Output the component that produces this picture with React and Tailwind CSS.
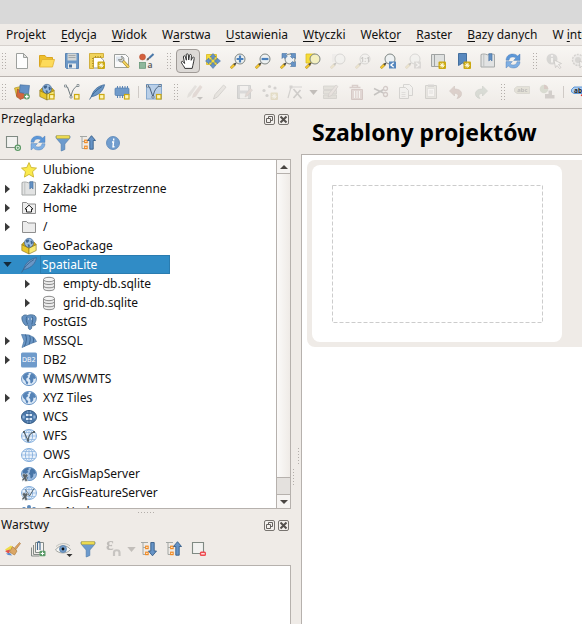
import React from "react";

const BLUE = "#6b97c6";

function Svg({ children, faded }) {
  return (
    <svg
      viewBox="0 0 16 16"
      aria-hidden="true"
      className={`size-4 shrink-0 overflow-visible ${faded ? "opacity-25 grayscale-50" : ""}`}
      fill="none"
    >
      {children}
    </svg>
  );
}

/* ---------- shared glyph parts ---------- */

const Lens = ({ fill = "#eef1f2", stroke = "#7f8784" }) => (
  <>
    <path d="M0.8 15.2 5 11" stroke="#9a7d1e" strokeWidth="2.600" />
    <path d="M0.8 15.2 4 12" stroke="#f6c833" strokeWidth="1.800" />
    <path d="M4.2 11.8 6 10" stroke="#444" strokeWidth="1.600" />
    <circle cx="10" cy="6" r="5" fill={fill} stroke={stroke} strokeWidth="1" />
  </>
);

const NewBadge = () => <rect x="10.500" y="10.500" width="4.500" height="4.500" fill="#fff6b8" stroke="#cba810" strokeWidth="1.200" />;

const StarBadge = () => (
  <>
    <rect x="8.500" y="8.600" width="7.500" height="7.400" rx="1" fill="#cba810" />
    <path d="M12.200 9.800v5M9.700 12.300h5M10.400 10.500l3.600 3.600M14 10.500l-3.600 3.600" stroke="#fffbe0" strokeWidth="1" />
  </>
);

const PlusBadge = () => (
  <>
    <circle cx="12.800" cy="12.600" r="3" fill="#5a9a67" />
    <path d="M12.800 10.800v3.600M11 12.600h3.600" stroke="#fff" strokeWidth="1.200" />
  </>
);

const RefreshArt = () => (
  <>
    <path d="M1 7.300C1.200 3.200 4 1 7.600 1c2.200 0 3.800.7 5 2L15 1v6.400H8.600l2.200-2.300C9.900 4.300 8.900 4 7.700 4 5.500 4 4.300 5.200 4 7.300Z" fill="#5c97d8" stroke="#4677b0" strokeWidth=".4" />
    <path d="M15 8.700c-.2 4.100-3 6.300-6.600 6.300-2.200 0-3.800-.7-5-2L1 15V8.600h6.400l-2.200 2.300c.9.800 1.900 1.100 3.100 1.100 2.200 0 3.400-1.200 3.700-3.300Z" fill="#7fafe3" stroke="#4677b0" strokeWidth=".4" />
  </>
);

const TreeLines = () => (
  <>
    <path d="M0 1.500h7M2 1.500v12h3M2 6.500h3" stroke="#a3a7a4" strokeWidth="1" />
    <rect x="4.700" y="5.200" width="2.400" height="2.400" fill="#fff" stroke="#f08a24" strokeWidth="1.200" />
    <rect x="4.700" y="11.200" width="2.400" height="2.400" fill="#fff" stroke="#f08a24" strokeWidth="1.200" />
  </>
);

const FeatherArt = () => (
  <>
    <path d="M2.500 12.800C3.500 7.500 7.500 2.200 15.500.700 14.500 6 11 10.500 3.500 12.500Z" fill="#6b97c6" stroke="#3f6a98" strokeWidth=".8" />
    <path d="M.6 15.500C3 10.500 7 6 13 2.500" stroke="#3a648f" strokeWidth=".9" />
  </>
);

const GlobeArt = ({ fill = "#dce9f7", land = "#5583b7" }) => (
  <>
    <ellipse cx="8" cy="8" rx="7.500" ry="6.600" fill={fill} stroke="#5d8cc0" strokeWidth=".9" />
    <path d="M1.500 5.200 4 2.600l3.200-.8.800 1.500-1.700 1.300 1 1.500-2.200 1.600.5 2.200 1.700 1-.8 2.500-1.200-.3-1-3.200-2-1.800ZM9 4.500l1.500-2.400 2.700 1.500 1.800 3-1 1.500-1.500-.6-.4 3-1.600 2-1.100-.5-.2-3-1.400-1.200 1-1.500Z" fill={land} />
  </>
);

const GridGlobeArt = ({ fill = "#eaf2fb", line = "#86b0de" }) => (
  <>
    <ellipse cx="8" cy="8" rx="7.500" ry="6.500" fill={fill} stroke={line} strokeWidth="1" />
    <ellipse cx="8" cy="8" rx="3.600" ry="6.500" stroke={line} strokeWidth=".9" />
    <path d="M8 1.500v13M.5 8h15M2 4.500h12M2 11.500h12" stroke={line} strokeWidth=".7" />
  </>
);

const BoxArt = () => (
  <>
    <path d="M.8 6.500 8 10v6L.8 12.500Z" fill="#e8c62b" stroke="#857017" strokeWidth=".6" />
    <path d="M15.200 6.500 8 10v6l7.200-3.500Z" fill="#f8ea78" stroke="#857017" strokeWidth=".6" />
    <path d="M.8 6.500 3 4l5 2 5-2 2.200 2.500L8 10Z" fill="#d7ae12" stroke="#857017" strokeWidth=".6" />
    <circle cx="8" cy="4.800" r="4.500" fill="#9bbce0" stroke="#3f648e" strokeWidth=".7" />
    <path d="m5 2 2.500-.8.800 1.800L6.500 4.800 5 4.200ZM9.500 3l1.500-.6 1 2.600-2 1.600ZM6.500 6.200l2 .2.500 2-1.700.6Z" fill="#3f648e" />
  </>
);

const VArt = ({ stroke = "#6b777c" }) => (
  <>
    <path d="M1.500 2.500 3.500 3 7 13 C8 7 10 3 14 2" stroke={stroke} strokeWidth="1" />
    <path d="M.5 1h2v2h-2ZM13 .5h2v2h-2ZM6 12h2v2H6Z" fill="#fff" stroke={stroke} strokeWidth=".7" />
  </>
);

const PencilArt = ({ fill = "#b98f7c" }) => (
  <path d="M1.500 15 3 10.500 11.500 1 14 3.200 5.500 13Z" fill={fill} stroke="#6b6661" strokeWidth=".8" />
);

const PageShape = ({ x = 0, y = 0 }) => (
  <path d={`M${x + 0.5} ${y + 0.5}h6l3 3v8h-9Z`} fill="#eef0ee" stroke="#7d817e" strokeWidth="1" />
);

const ArcMark = () => (
  <path d="M1 9 3 7.500l2 1 1-1 1 2-1.500 2.500 1.500 3-3 .5-.5-2-2 2-.5-2 1.500-2Z" fill="#5a6369" stroke="#eef2f6" strokeWidth=".5" />
);

const art = {
  newFile: (
    <>
      <path d="M2.500.500H9.500L13.500 4.500v11h-11Z" fill="#fdfdfd" stroke="#9da09d" />
      <path d="M9.500.500v4h4Z" fill="#e2e3e1" stroke="#9da09d" />
    </>
  ),
  open: (
    <>
      <path d="M.5 13.500V2.500H6L7.500 4.500H13.500V7" fill="#eebf2c" stroke="#d9a520" />
      <path d="M.6 14 3 6.500H15.500L13.500 14Z" fill="#fddb5a" stroke="#dfb030" strokeWidth=".8" />
    </>
  ),
  save: (
    <>
      <path d="M1.500.500h13v15H2.500l-1-1Z" fill={BLUE} stroke="#5b85b3" />
      <path d="M3.500.500h9v7h-9Z" fill="#d3d6d6" />
      <path d="M4.500 2.500h7M4.500 4.500h7" stroke="#a3a8aa" />
      <path d="M4 10.500h8v5H4Z" fill="#eceeee" />
      <path d="M5 11.500h3v3H5Z" fill="#4a719c" />
    </>
  ),
  newLayout: (
    <>
      <path d="M4.500 4.500H11.500L14.500 7v8h-10Z" fill="#fff" stroke="#9a9d9b" />
      <path d="M.5.500h14v4H4.500v11h-4Z" fill="#f0d35a" stroke="#c9a325" strokeWidth=".8" />
      <path d="M3 5.500h1.500M3 8h1.500M3 10.500h1.500M3 13h1.500M6.500 3v1.500M9 3v1.500M11.500 3v1.500" stroke="#9c7e1c" strokeWidth=".8" />
      <StarBadge />
    </>
  ),
  layouts: (
    <>
      <path d="M.5 1.500h11l3 3v10H.5Z" fill="#fafafa" stroke="#9b9f9c" />
      <path d="M2 3.500h6v5H2Z" fill="#dfe7ef" />
      <path d="m8 7 6 6.500" stroke="#b0912a" strokeWidth="3" strokeLinecap="round" />
      <path d="m8.500 7.500 5.500 6" stroke="#f4d564" strokeWidth="1.800" strokeLinecap="round" />
      <path d="M4.500 6.500c.2 2 2.200 3 4 2.200L9.800 7c.6-1.800-.5-3.600-2.600-3.700l1.200 2L7 6.900Z" fill="#d4d7d5" stroke="#6c706e" strokeWidth=".7" />
    </>
  ),
  style: (
    <>
      <circle cx="3.500" cy="4" r="3" fill="#d4603c" stroke="#b04a2a" strokeWidth=".5" />
      <rect x=".5" y="9.500" width="6" height="5.800" fill="#8fb79c" stroke="#679779" strokeWidth=".8" />
      <path d="m14.500 1-4.500 4.200" stroke="#4a78a8" strokeWidth="2" />
      <path d="M7.500 7.500c0-1.800 1-3 2.500-2.700C10.800 6.500 9.500 7.700 7.500 7.500Z" fill="#666" />
      <text x="8.600" y="15.200" fontSize="8.500" fill="#5a5a5a" fontFamily="Noto Sans" fontWeight="600">a</text>
    </>
  ),
  hand: (
    <path
      d="M4.800 15.400C4.300 13.500 2.600 12 1.500 9.800.9 8.500 2.300 7.800 3.200 8.800L4.600 10.500 3.400 4C3.200 2.600 5 2.300 5.300 3.600L6.400 7.200 6.200 1.800C6.200.4 8.200.4 8.300 1.800L8.700 7 9.500 2.300C9.700 1 11.500 1.200 11.400 2.600L11.200 7.300 12.500 4.600C13.100 3.500 14.600 4.100 14.200 5.500 13.600 7.600 13.700 10 12.800 12.500L12.200 15.400Z"
      fill="#fff" stroke="#333" strokeWidth="1" strokeLinejoin="round"
    />
  ),
  pan: (
    <>
      <path d="M1.500 1.500h10v10h-10Z" fill="#f5dc3a" stroke="#d8b820" strokeWidth=".8" />
      <path d="M8 .500 11 4H9.200v2.200H6.800V4H5ZM8 15.500 5 12h1.800V9.800h2.400V12H11ZM.500 8 4 5v1.800h2.200v2.400H4V11ZM15.500 8 12 5v1.800H9.800v2.400H12V11Z" fill="#6693c6" stroke="#4672a3" strokeWidth=".5" />
    </>
  ),
  zoomIn: (<><Lens /><path d="M10 2.600v6.800M6.600 6h6.800" stroke="#4a80bb" strokeWidth="2.200" /></>),
  zoomOut: (<><Lens /><path d="M6.600 6h6.800" stroke="#4a80bb" strokeWidth="2.200" /></>),
  zoomFull: (
    <>
      <Lens />
      <path d="M2 .500h5L5.600 2 7 3.500 5 5.500 3.500 4 2 5.500ZM15.500.500v5L14 4l-1.500 1.500-2-2L12 2 10.500.500ZM15.500 13.500h-5L12 12l-1.500-1.500 2-2L14 10l1.500-1.500Z" fill="#6693c6" stroke="#4672a3" strokeWidth=".6" />
    </>
  ),
  zoomSel: (
    <>
      <path d="M1 1h9v9H1Z" fill="#f5dc3a" stroke="#dcbc22" strokeWidth=".8" />
      <Lens fill="#f4f0c0" />
    </>
  ),
  zoomLayer: (<><path d="M2 1h7v8H2Z" fill="#ddd" /><Lens /></>),
  zoomNative: (
    <>
      <Lens />
      <text x="5.600" y="8.600" fontSize="6.500" fontWeight="700" fill="#444" fontFamily="Noto Sans">1:1</text>
    </>
  ),
  zoomLast: (
    <>
      <Lens />
      <path d="M9 8.500h7v7H9Z" fill="#5586bd" />
      <path d="m13.700 9.800-2.800 2.200 2.800 2.200" stroke="#fff" strokeWidth="1.300" />
    </>
  ),
  zoomNext: (
    <>
      <Lens />
      <path d="M9 8.500h7v7H9Z" fill="#999" />
      <path d="m11.200 9.800 2.800 2.200-2.800 2.200" stroke="#fff" strokeWidth="1.300" />
    </>
  ),
  newMap: (
    <>
      <path d="M1.500 1.500h13v12h-13Z" fill="#dfe1e0" stroke="#a0a3a2" />
      <path d="M4.500 1.500v12" stroke="#a0a3a2" />
      <StarBadge />
    </>
  ),
  newBookmark: (
    <>
      <path d="M3.500.500h8V13L7.500 10l-4 2.500Z" fill="#5888be" stroke="#446f9e" />
      <StarBadge />
    </>
  ),
  bookmarks: (
    <>
      <path d="M1 1.500c2-.7 4-.7 6.500.300 2-1 5-1 7-.3v12.500H1Z" fill="#e2e3e3" stroke="#a6a9a8" />
      <path d="M3.800 1.300v12.500" stroke="#bfc1c0" />
      <path d="M8.800.7h3.200v7.300l-1.600-1.500L8.800 8Z" fill="#6391c4" stroke="#446f9e" strokeWidth=".6" />
    </>
  ),
  refresh: <RefreshArt />,
  identify: (
    <>
      <circle cx="6" cy="6" r="5.500" fill="#858b90" />
      <path d="M6 2v1.800M6 5v4.500" stroke="#fff" strokeWidth="1.800" />
      <path d="m8 7 7.500 3.500-3 1 2.500 3-1.500 1-2.500-3-1.500 2.200Z" fill="#fff" stroke="#555" strokeWidth=".8" />
    </>
  ),
  action: (
    <>
      <circle cx="7" cy="7" r="5.500" fill="#d8d8d8" stroke="#777" strokeWidth="1.400" strokeDasharray="2 1" />
      <circle cx="7" cy="7" r="3" fill="#888" />
      <path d="m8.500 8 6.500 3-3 1 2 3-1.500.8-2.200-2.800-1.300 2Z" fill="#fff" stroke="#555" strokeWidth=".8" />
    </>
  ),
  dataSource: (
    <>
      <path d="m.5 4 6-1.500 2 8.500-5.500 2.500Z" fill="#e6c740" stroke="#a88c20" strokeWidth=".6" />
      <path d="m2.500 12 1-7 7 5 2 3-6.500 2.500Z" fill="#d2653f" stroke="#9c4526" strokeWidth=".6" />
      <path d="m6 .8 9.500.7-1 8.500-9-1.500Z" fill="#6491c5" stroke="#406a99" strokeWidth=".6" />
      <PlusBadge />
    </>
  ),
  geoPackageNew: (<><BoxArt /><NewBadge /></>),
  shapeNew: (<><VArt /><NewBadge /></>),
  spatialiteNew: (<><FeatherArt /><NewBadge /></>),
  memoryNew: (
    <>
      <path d="M3.500 2v12M6 2v12M8.500 2v12M11 2v12M13.500 2v12" stroke="#5c86b6" strokeWidth="1" />
      <rect x="1" y="4" width="14" height="7.500" rx="1" fill="#6f9aca" stroke="#527cac" strokeWidth=".7" />
      <NewBadge />
    </>
  ),
  virtualNew: (
    <>
      <rect x=".5" y=".5" width="15" height="14.500" fill="#b9cfe8" stroke="#85a8ce" />
      <VArt stroke="#47607a" />
      <NewBadge />
    </>
  ),
  edits: (
    <>
      <path d="m0 14 1-4 7-9 2 1.500-6.500 9.500Z" fill="#b7afa7" />
      <path d="m5 14 1-4 7-9 2.500 2-6.500 9.500Z" fill="#c99386" />
      <path d="M10 13h6l-3 3Z" fill="#444" />
    </>
  ),
  pencil: <PencilArt fill="#c9c2b4" />,
  saveEdits: (
    <>
      <path d="M.5 1.500h13v13H.5Z" fill="#8e9aa6" stroke="#67717a" />
      <path d="M3 2h8v4.500H3ZM3 9.500h8v5H3Z" fill="#eee" />
      <path d="m8 13 1-3.500 4.500-5 2 1.500-4.500 5.500Z" fill="#c98f80" stroke="#766" strokeWidth=".5" />
    </>
  ),
  addPoint: (
    <>
      <circle cx="2" cy="6.500" r="1.600" fill="#777" /><circle cx="7.500" cy="2.500" r="1.600" fill="#777" />
      <circle cx="13" cy="4" r="1.600" fill="#777" /><circle cx="5" cy="11.500" r="1.600" fill="#777" />
      <StarBadge />
    </>
  ),
  vertex: (
    <>
      <path d="M1 14 4 3h11" stroke="#777" strokeWidth="1.200" />
      <path d="M2.500 1.500h3v3h-3Z" fill="#777" />
      <path d="m6.500 5 8 9.500M13.500 6l-7 8" stroke="#666" strokeWidth="1.700" />
    </>
  ),
  attributes: (
    <>
      <path d="M.5 2h13v3.500H.5ZM.5 6.500h13V10H.5ZM.5 11h13v3.500H.5Z" fill="#b6b29a" stroke="#77756a" strokeWidth=".8" />
      <path d="m5 13 1-3.500L13 1l2 1.500-6.500 9Z" fill="#d3b8ac" stroke="#766" strokeWidth=".7" />
    </>
  ),
  trash: (
    <>
      <path d="M1.500 3.500h11M4.500 3V1.500h5V3" stroke="#a3605c" strokeWidth="1.500" />
      <path d="M3.500 5.500h11v10h-11Z" fill="#c98985" stroke="#a3504c" />
      <path d="M6.500 7v7M9 7v7M11.500 7v7" stroke="#fff" />
    </>
  ),
  cut: (
    <>
      <path d="M1 4.500 10.500 9M1 11 10.500 5.500" stroke="#444" strokeWidth="1.500" />
      <circle cx="12.500" cy="4.500" r="2" stroke="#855" strokeWidth="1.300" />
      <circle cx="12.500" cy="10.500" r="2" stroke="#855" strokeWidth="1.300" />
    </>
  ),
  copy: (<><PageShape x={5} y={0} /><PageShape x={1} y={3} /><path d="M3.500 8.500h4M3.500 10.500h4M3.500 12.500h4" stroke="#999" strokeWidth=".8" /></>),
  paste: (
    <>
      <path d="M2.500 1.500h11v13h-11Z" fill="#c9c8b6" stroke="#77766c" />
      <path d="M5 .500h6v2.500H5Z" fill="#888" />
      <path d="M4.500 4.500h7v8h-7Z" fill="#fff" stroke="#999" strokeWidth=".6" />
      <path d="M6 7h4M6 9h4" stroke="#999" strokeWidth=".8" />
    </>
  ),
  undo: <path d="m1.500 7 5-5v3C11 5 14 7 13.500 10.500 13.200 12.500 11.500 14 9 14.500 11 12 10.500 9.500 6.500 9.300V12Z" fill="#b96a58" stroke="#8c5040" strokeWidth=".7" />,
  redo: <path d="m14.500 7-5-5v3C5 5 2 7 2.500 10.500 2.800 12.500 4.500 14 7 14.500 5 12 5.500 9.500 9.500 9.300V12Z" fill="#7fa588" stroke="#5c7c64" strokeWidth=".7" />,
  label: (
    <>
      <path d="M.5 4.500 3 2.500h12.500v7H3L.5 7.500Z" fill="#b9b77f" stroke="#8a886b" strokeWidth=".8" />
      <text x="3.200" y="8.300" fontSize="6" fontWeight="700" fill="#222" fontFamily="Noto Sans">abc</text>
    </>
  ),
  diagram: (
    <>
      <circle cx="5" cy="5" r="4.300" fill="#84a565" /><path d="M5 5V.7A4.300 4.300 0 0 1 9.300 5Z" fill="#b0503c" />
      <path d="M9.500 6.500h3.500v8H9.500ZM6 10h3.500v4.500H6ZM13 11h2.500v3.500H13Z" fill="#7f6f68" />
    </>
  ),
  pinLabel: (
    <>
      <path d="M.5 5.500 3 3h13v6.500H3L.5 8Z" fill="#a9cdf3" stroke="#5690d4" strokeWidth=".9" />
      <text x="3" y="8.800" fontSize="6.500" fontWeight="700" fill="#222" fontFamily="Noto Sans">ab</text>
      <path d="m10 11 5 2" stroke="#d33" strokeWidth="1.500" />
    </>
  ),
  addLayer: (
    <>
      <path d="M1.500 1.500h11v11h-11Z" fill="#f2f2f0" stroke="#808a83" strokeWidth="1.100" />
      <circle cx="12.800" cy="12.800" r="2.600" fill="#fff" stroke="#5b9965" strokeWidth="1.300" />
      <path d="M12.800 11.500v2.600M11.500 12.800h2.600" stroke="#5b9965" />
    </>
  ),
  filter: (
    <>
      <path d="M1 1h14v2L9.800 9v5.500L6.200 16V9L1 3Z" fill="#6c9acd" stroke="#4f7cae" strokeWidth=".7" />
      <path d="M1.500.7h13v2.600h-13Z" fill="#f4e254" stroke="#bdaa3c" strokeWidth=".7" />
    </>
  ),
  collapse: (<><TreeLines /><path d="m11.500.7 4 4.800h-2.300v8.700H9.800V5.500H7.500Z" fill="#6693c6" stroke="#355d89" strokeWidth=".9" /></>),
  expand: (<><TreeLines /><path d="m11.500 14.800-4-4.800h2.300V1.500h3.400V10h2.300Z" fill="#6693c6" stroke="#355d89" strokeWidth=".9" /></>),
  info: (
    <>
      <circle cx="8" cy="8" r="6.500" fill="#719dce" stroke="#5784b6" strokeWidth=".8" />
      <path d="M8.700 3.500v2M7 7h1.500l-.5 4.800h1.500" stroke="#fff" strokeWidth="1.400" />
    </>
  ),
  star: <path d="m8 .6 2.200 4.900 5.300.6-4 3.600 1.100 5.400L8 12.400l-4.600 2.700 1.100-5.400-4-3.600 5.300-.6Z" fill="#fbea4e" stroke="#cbb42c" strokeWidth=".9" />,
  home: (
    <>
      <path d="M1.500 13.500v-11h4l1.500 1.500h7.500v9.500Z" fill="#ececec" stroke="#8e8e8e" />
      <path d="m4 9 4-3.800L12 9h-1.500v3h-5V9Z" fill="#fff" stroke="#222" strokeWidth="1" />
    </>
  ),
  folder: <path d="M1.500 13.500v-11h4l1.500 1.500h7.500v9.500Z" fill="#ececec" stroke="#8e8e8e" />,
  geoPackage: <BoxArt />,
  feather: <FeatherArt />,
  db: (
    <>
      <path d="M2.500 3.500v9c0 1.400 2.500 2.200 5.500 2.200s5.500-.8 5.500-2.200v-9" fill="#ececec" stroke="#8b8b8b" />
      <path d="M2.500 6.500c0 1.400 2.500 2 5.500 2s5.500-.6 5.500-2M2.500 9.800c0 1.400 2.500 2 5.500 2s5.500-.6 5.500-2" stroke="#8b8b8b" />
      <ellipse cx="8" cy="3.500" rx="5.500" ry="2.200" fill="#f4f4f4" stroke="#8b8b8b" />
    </>
  ),
  postgis: (
    <>
      <path d="M1 2.800C2.500.5 5 .7 6.500 1.500 9 .4 12 .5 14 1.800 16 3.500 15.200 7 13.500 9.800L15 10.500 12.500 11.800 11 11.500 10.500 14.500C9.500 16 8 15.700 7.500 14.500L7 11 4.500 11.500C2 9.500.3 5.500 1 2.800Z" fill="#6692c2" stroke="#41698f" strokeWidth=".8" />
      <path d="M6 2.500C4.500 5 5.500 7.500 6.500 10M11 2.500c1.500 2 .5 5-.2 8" stroke="#3b648f" strokeWidth=".9" />
      <path d="M7 5h1M10 5h1" stroke="#fff" />
    </>
  ),
  mssql: (
    <>
      <path d="M.5 1.500 8 2 13 4.500 15.500 8.500 10 10.500 1 14.500 3 8Z" fill="#6b97c6" stroke="#4a75a4" strokeWidth=".7" />
      <path d="M4.500 1.500C6 5 5.500 9 3.500 13.500M8.500 2.500C9.800 5 9.300 8.500 8 11.500M12 4.500C12.800 6.500 12.600 8 12 9.800" stroke="#355f8c" strokeWidth=".9" />
    </>
  ),
  db2: (
    <>
      <rect x="0" y=".5" width="16" height="15" rx="1.500" fill="#6f9bcb" />
      <text x="1" y="9.800" fontSize="6.600" fill="#fff" fontFamily="DejaVu Sans">DB2</text>
    </>
  ),
  wms: <GlobeArt />,
  wcs: (
    <>
      <ellipse cx="8" cy="8" rx="7.500" ry="6.500" fill="#4c78a9" stroke="#2f5783" />
      <path d="M5 5h6v2H5ZM5 9h6v2H5Z" fill="#dbe8f6" />
      <path d="M1.500 6.500h2.200v3H1.500ZM12.300 6.500h2.200v3h-2.200ZM6 2.500h4v1H6ZM6 12.500h4v1H6Z" fill="#92b5db" />
      <path d="M8 1.500v13" stroke="#2f5783" strokeWidth=".8" />
    </>
  ),
  wfs: (
    <>
      <GridGlobeArt />
      <path d="M3 4 7 12.500C7.500 8 9 5 13 4" stroke="#55636b" strokeWidth="1.100" />
      <path d="M2 3h2v2H2ZM12 3h2v2h-2ZM6 11.500h2v2H6Z" fill="#55636b" />
    </>
  ),
  ows: <GridGlobeArt />,
  arcMap: (<><GlobeArt fill="#9dbce0" land="#4875a7" /><ArcMark /></>),
  arcFeature: (<><GridGlobeArt /><path d="M4.500 4.500 8.500 11 13 3.500" stroke="#55636b" /><ArcMark /></>),
  geoNode: (
    <g fill="#5a88ba">
      <circle cx="8" cy="3" r="2" /><circle cx="3" cy="5" r="2" /><circle cx="13" cy="5" r="2" />
      <path d="M7 4h2v9H7ZM3 6l5 4 5-4v3l-5 4-5-4Z" />
    </g>
  ),
  brush: (
    <>
      <path d="M0 8.500 6 4.500l2 2-5 5Z" fill="#efdc48" /><path d="m0 10 5-1.500L4 13Z" fill="#e05050" />
      <path d="M1 12.500 5 12l2 2.500-4-.5Z" fill="#5a8ace" />
      <path d="m9.500 7 5-5.500 1 1-4.500 6Z" fill="#dfa564" stroke="#a97438" strokeWidth=".6" />
      <path d="m7.500 5.500 4.500 4.500-2.500 4L4.500 11Z" fill="#dba766" stroke="#ae7c3e" strokeWidth=".7" />
    </>
  ),
  addGroup: (
    <>
      <path d="M5.500 1.500h8v10h-8Z" fill="#f5f4f2" stroke="#858b87" />
      <path d="M3.500 4v9.500h7M1.500 6.500v8.500h8" stroke="#858b87" />
      <path d="M7.500 9V2.500C7.500 0 10 0 10 2.500V9" stroke="#41698f" strokeWidth="1.100" />
      <rect x="9.500" y="9.700" width="6" height="5.500" rx="1" fill="#5a9a67" /><path d="M12.500 10.700v3.500M10.700 12.500h3.500" stroke="#fff" />
    </>
  ),
  eye: (
    <>
      <path d="M.5 9C4 3.500 12 3.500 15.500 8.500 12 13 4 13 .5 9Z" fill="#f6f6f4" stroke="#a3a6a2" />
      <path d="M1 5.500C5 1.700 11.500 1.700 15 5" stroke="#b9bcb8" strokeWidth=".9" />
      <circle cx="8" cy="8" r="3.500" fill="#769fcc" stroke="#4d78a7" strokeWidth=".7" /><circle cx="8" cy="8" r="1.400" fill="#111" />
      <path d="M11.500 13h6l-3 3Z" fill="#333" />
    </>
  ),
  epsilon: (
    <>
      <text x="1" y="8.500" fontSize="18" fontWeight="700" fill="#333" fontFamily="Liberation Serif">ε</text>
      <path d="M9 15v-3.500c0-3 5.500-3 5.500 0V15" stroke="#555" strokeWidth="2.200" />
    </>
  ),
  removeLayer: (
    <>
      <path d="M1.500 1.500h11v11h-11Z" fill="#f2f2f0" stroke="#808a83" strokeWidth="1.100" />
      <rect x="8.800" y="10.500" width="6.200" height="4.500" rx="1.500" fill="#ee4b50" /><path d="M10.200 12.800h3.500" stroke="#fff" strokeWidth="1.200" />
    </>
  ),
};

const Icon = ({ name, faded }) => <Svg faded={faded}>{art[name]}</Svg>;

/* ---------- toolbar parts ---------- */

function Tool({ icon, label, active, disabled }) {
  return (
    <button
      type="button"
      aria-label={label}
      aria-pressed={active || undefined}
      disabled={disabled}
      className={`flex size-6 shrink-0 items-center justify-center rounded-sm ${active ? "border border-[#a09b97] bg-[#dcd9d6]" : ""}`}
    >
      <Icon name={icon} faded={disabled} />
    </button>
  );
}

const Dots = ({ className }) => (
  <span className={`bg-[radial-gradient(circle,#b3aeaa_0.6px,transparent_0.8px)] bg-[size:3px_3px] ${className}`} />
);

const Grip = ({ first }) => (
  <span className={`flex h-6 shrink-0 items-center ${first ? "w-[9px] pl-px" : "w-[15px] pl-[6px]"}`}>
    <Dots className="h-[18px] w-[6px]" />
  </span>
);

const Separator = () => (
  <span className="flex h-6 w-[6px] shrink-0 items-center justify-center">
    <span className="h-3 w-px bg-[#cfcac6]" />
  </span>
);

const Caret = ({ label }) => (
  <button type="button" disabled aria-label={label} className="flex h-6 w-[10px] shrink-0 items-center justify-center">
    <svg viewBox="0 0 10 6" className="h-[5px] w-[9px]" aria-hidden="true"><path d="M0 0h10L5 6Z" fill="#c2beba" /></svg>
  </button>
);

function ToolRow({ items }) {
  return items.map((it, i) => {
    if (it === "grip") return <Grip key={i} first={i === 0} />;
    if (it === "sep") return <Separator key={i} />;
    if (it === "caret") return <Caret key={i} label="Więcej opcji" />;
    const [icon, label, state] = it;
    return <Tool key={i} icon={icon} label={label} disabled={state === "off"} active={state === "on"} />;
  });
}

const fileTools = [
  "grip",
  ["newFile", "Nowy projekt"], ["open", "Otwórz"], ["save", "Zapisz"], ["newLayout", "Nowy wydruk"],
  ["layouts", "Menedżer wydruków"], ["style", "Menedżer stylów"],
  "grip",
  ["hand", "Przesuń mapę", "on"], ["pan", "Przesuń do zaznaczenia"], ["zoomIn", "Powiększ"], ["zoomOut", "Pomniejsz"],
  ["zoomFull", "Pełny zasięg"], ["zoomSel", "Powiększ do zaznaczenia"], ["zoomLayer", "Powiększ do warstwy", "off"],
  ["zoomNative", "Rozdzielczość rastra", "off"], ["zoomLast", "Poprzedni widok"], ["zoomNext", "Następny widok", "off"],
  ["newMap", "Nowy widok mapy"], ["newBookmark", "Nowa zakładka"], ["bookmarks", "Zakładki"], ["refresh", "Odśwież"],
  "grip",
  ["identify", "Informacje o obiekcie", "off"], ["action", "Uruchom akcję", "off"],
];

const layerTools = [
  "grip",
  ["dataSource", "Źródła danych"], ["geoPackageNew", "Nowa warstwa GeoPackage"], ["shapeNew", "Nowa warstwa shapefile"],
  ["spatialiteNew", "Nowa warstwa SpatiaLite"], ["memoryNew", "Nowa warstwa tymczasowa"],
  "sep",
  ["virtualNew", "Nowa warstwa wirtualna"],
  "grip",
  ["edits", "Bieżące edycje", "off"], ["pencil", "Tryb edycji", "off"], ["saveEdits", "Zapisz edycje", "off"],
  ["addPoint", "Dodaj obiekt", "off"], ["vertex", "Edycja wierzchołków", "off"],
  "caret",
  ["attributes", "Zmień atrybuty", "off"], ["trash", "Usuń zaznaczone", "off"], ["cut", "Wytnij", "off"],
  ["copy", "Kopiuj", "off"], ["paste", "Wklej", "off"], ["undo", "Cofnij", "off"], ["redo", "Ponów", "off"],
  "grip",
  ["label", "Etykiety", "off"], ["diagram", "Diagramy", "off"],
  "sep",
  ["pinLabel", "Przypnij etykiety"],
];

/* Each menu title is split around its access key. */
const menus = [
  ["Pro", "j", "ekt"], ["", "E", "dycja"], ["", "W", "idok"], ["W", "a", "rstwa"], ["", "U", "stawienia"],
  ["", "W", "tyczki"], ["Wekt", "o", "r"], ["", "R", "aster"], ["", "B", "azy danych"], ["W ", "i", "nternecie"],
];

/* ---------- docks ---------- */

function DockTitle({ children }) {
  const box = "flex size-[11px] items-center justify-center rounded-xs border border-[#77736f] bg-[#f3f0ed]";
  return (
    <header className="flex h-5 items-center justify-between pl-px pr-[2px]">
      <h2>{children}</h2>
      <div className="flex gap-[3px]">
        <button type="button" aria-label={`Oddokuj: ${children}`} className={box}>
          <svg viewBox="0 0 9 9" className="size-[9px]" fill="none" stroke="#66625f" aria-hidden="true">
            <path d="M3.500 1.500h4v4h-4Z" /><path d="M1.500 3.500h4v4h-4Z" fill="#f3f0ed" />
          </svg>
        </button>
        <button type="button" aria-label={`Zamknij: ${children}`} className={box}>
          <svg viewBox="0 0 9 9" className="size-[9px]" stroke="#55514e" strokeWidth="2" aria-hidden="true"><path d="m1.500 1.500 6 6M7.500 1.500l-6 6" /></svg>
        </button>
      </div>
    </header>
  );
}

const tree = [
  { label: "Ulubione", icon: "star" },
  { label: "Zakładki przestrzenne", icon: "bookmarks", more: true },
  { label: "Home", icon: "home", more: true },
  { label: "/", icon: "folder", more: true },
  { label: "GeoPackage", icon: "geoPackage" },
  { label: "SpatiaLite", icon: "feather", open: true },
  { label: "empty-db.sqlite", icon: "db", more: true, child: true },
  { label: "grid-db.sqlite", icon: "db", more: true, child: true },
  { label: "PostGIS", icon: "postgis" },
  { label: "MSSQL", icon: "mssql", more: true },
  { label: "DB2", icon: "db2", more: true },
  { label: "WMS/WMTS", icon: "wms" },
  { label: "XYZ Tiles", icon: "wms", more: true },
  { label: "WCS", icon: "wcs" },
  { label: "WFS", icon: "wfs" },
  { label: "OWS", icon: "ows" },
  { label: "ArcGisMapServer", icon: "arcMap" },
  { label: "ArcGisFeatureServer", icon: "arcFeature" },
  { label: "GeoNode", icon: "geoNode" },
];

function TreeRow({ label, icon, more, open, child }) {
  return (
    <li
      role="treeitem"
      aria-level={child ? 2 : 1}
      aria-selected={!!open}
      aria-expanded={open ? true : more ? false : undefined}
      className={`flex h-[19px] items-center ${child ? "pl-5" : ""} ${open ? "w-[170px] bg-[#308cc6] text-white" : ""}`}
    >
      <span className="flex w-[21px] shrink-0 justify-center pr-[6px]">
        {more && <svg viewBox="0 0 6 10" className="h-[10px] w-[5px]" aria-hidden="true"><path d="M0 0 6 5 0 10Z" fill="#3a3a3a" /></svg>}
        {open && <svg viewBox="0 0 10 6" className="h-[5px] w-[9px]" aria-hidden="true"><path d="M0 0h10L5 6Z" fill="#14293a" /></svg>}
      </span>
      <Icon name={icon} />
      <span className={`flex h-full items-center whitespace-nowrap ${open ? "ml-[3px] flex-1 border border-[#2a7cb0] pl-px" : "pl-[6px]"}`}>{label}</span>
    </li>
  );
}

function ScrollBar() {
  const end = "flex h-[14px] shrink-0 items-center justify-center bg-[#f6f4f2]";
  return (
    <div className="flex w-[14px] shrink-0 flex-col border-l border-[#b6b1ad] bg-[#e4e1de]">
      <button type="button" aria-label="Przewiń w górę" className={`${end} border-b border-[#b6b1ad]`}>
        <svg viewBox="0 0 8 4" className="h-1 w-2" aria-hidden="true"><path d="M0 4h8L4 0Z" fill="#4a4643" /></svg>
      </button>
      <div className="flex-1 border-b border-[#b6b1ad] bg-linear-to-r from-[#fbfaf9] to-[#efebe7]" />
      <div className="h-4" />
      <button type="button" aria-label="Przewiń w dół" className={`${end} border-t border-[#b6b1ad]`}>
        <svg viewBox="0 0 8 4" className="h-1 w-2" aria-hidden="true"><path d="M0 0h8L4 4Z" fill="#4a4643" /></svg>
      </button>
    </div>
  );
}

export default function App() {
  const bar = "flex items-center gap-px overflow-hidden border-b border-[#b9b3af] bg-linear-to-b from-[#f8f6f3] to-[#eeeae6]";
  const dockTools = "flex h-[30px] shrink-0 items-center gap-px pb-[2px] pl-px";
  return (
    <div className="flex h-screen flex-col overflow-hidden bg-[#efebe7] font-['Noto_Sans',sans-serif] text-[12px] leading-4 text-[#111]">
      <div className="h-6 shrink-0 bg-[#d9d9d9]" />
      <nav aria-label="Menu główne" className="flex h-[22px] shrink-0 items-center gap-[15px] overflow-hidden border-b border-[#d6d1cd] pl-[6px]">
        {menus.map(([a, key, b]) => (
          <button key={a + key + b} type="button" className="shrink-0 whitespace-pre">
            {a}<span className="underline decoration-1 underline-offset-2 [text-decoration-skip-ink:none]">{key}</span>{b}
          </button>
        ))}
      </nav>
      <div role="toolbar" aria-label="Projekt i nawigacja" className={`${bar} h-[31px] shrink-0`}><ToolRow items={fileTools} /></div>
      <div role="toolbar" aria-label="Warstwy i edycja" className={`${bar} h-8 shrink-0 pb-px`}><ToolRow items={layerTools} /></div>

      <div className="flex min-h-0 flex-1">
        <div className="flex w-1/2 shrink-0 flex-col">
          <section aria-label="Przeglądarka" className="shrink-0">
            <DockTitle>Przeglądarka</DockTitle>
            <div className={dockTools}>
              <Tool icon="addLayer" label="Dodaj warstwy" />
              <Tool icon="refresh" label="Odśwież listę" />
              <Tool icon="filter" label="Filtruj" />
              <Tool icon="collapse" label="Zwiń wszystko" />
              <Tool icon="info" label="Właściwości" />
            </div>
            <div className="flex h-[350px] overflow-hidden border-y border-r border-[#b6b1ad] bg-white">
              <ul role="tree" aria-label="Źródła danych" className="min-w-0 flex-1">
                {tree.map((row) => <TreeRow key={row.label} {...row} />)}
              </ul>
              <ScrollBar />
            </div>
          </section>
          <div className="flex h-[6px] shrink-0 items-center justify-center"><Dots className="h-[3px] w-[18px]" /></div>
          <section aria-label="Warstwy" className="flex min-h-0 flex-1 flex-col">
            <DockTitle>Warstwy</DockTitle>
            <div className={dockTools}>
              <Tool icon="brush" label="Stylizacja warstw" />
              <Tool icon="addGroup" label="Dodaj grupę" />
              <Tool icon="eye" label="Motywy mapy" />
              <Tool icon="filter" label="Filtruj legendę" />
              <Tool icon="epsilon" label="Filtruj wyrażeniem" disabled />
              <Caret label="Opcje filtra" />
              <Tool icon="expand" label="Rozwiń wszystko" />
              <Tool icon="collapse" label="Zwiń wszystko" />
              <Tool icon="removeLayer" label="Usuń warstwę" />
            </div>
            <div className="flex-1 border-r border-t border-[#b6b1ad] bg-white" />
          </section>
        </div>

        <div className="flex w-[10px] shrink-0 items-center justify-center">
          <span className="flex items-center">
            <Dots className="mt-[220px] h-[18px] w-[3px]" />
            <Dots className="ml-[2px] mt-[178px] h-[18px] w-[3px]" />
          </span>
        </div>

        <main className="flex min-w-0 flex-1 flex-col">
          <h1 className="flex h-[45px] shrink-0 items-center pl-[11px] text-[23px] font-bold leading-8 text-black">Szablony projektów</h1>
          <div className="flex-1 border-l border-t border-[#b6b1ad] bg-white pl-[5px] pt-[5px]">
            <div className="rounded-l-lg bg-[#efebe7] p-[5px]">
              <button type="button" aria-label="Pusty szablon" className="block w-[250px] rounded-lg bg-white px-5 pb-[19px] pt-5">
                <svg viewBox="0 0 211 138" className="block h-[138px] w-[211px]" aria-hidden="true">
                  <rect x=".5" y=".5" width="210" height="137" fill="none" stroke="#cccccc" strokeDasharray="4 2" />
                </svg>
              </button>
            </div>
          </div>
        </main>
      </div>
    </div>
  );
}
